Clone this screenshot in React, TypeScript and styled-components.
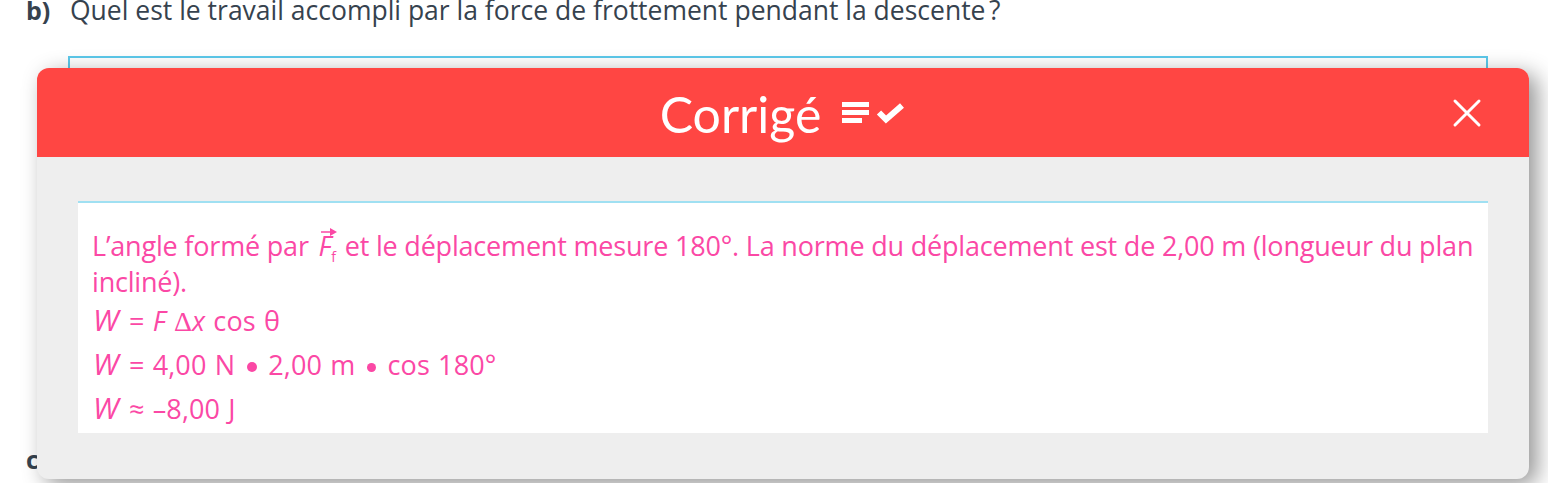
import React from "react";
import styled, { createGlobalStyle } from "styled-components";

const Global = createGlobalStyle`
  html, body { margin: 0; padding: 0; background: #fff; overflow: hidden; }
  #root { width: 1548px; height: 483px; }
`;

const Page = styled.div`
  position: relative;
  width: 1548px;
  height: 483px;
  overflow: hidden;
  padding: 0 0 0 26px;
  box-sizing: border-box;
  font-family: "Open Sans", "Noto Sans", sans-serif;
  color: #36424e;
`;

const Question = styled.div`
  display: flex;
  align-items: baseline;
  margin-top: -6px;
  font-size: 26.5px;
  font-weight: 400;
  line-height: 33px;
`;

const Label = styled.b`
  width: 44px;
  font-weight: 700;
  font-size: 25px;
`;

const AnswerBox = styled.div`
  margin: 29px 0 0 42px;
  width: 1420px;
  height: 340px;
  border: 2px solid #5cc8ea;
  box-sizing: border-box;
`;

const NextLabel = styled.b`
  display: block;
  margin-top: 46px;
  font-size: 25px;
  line-height: 34px;
  font-weight: 700;
`;

const Modal = styled.section`
  position: absolute;
  left: 37px;
  top: 68px;
  width: 1492px;
  height: 411px;
  border-radius: 12px;
  background: #eeeeee;
  box-shadow: 8px 6px 22px rgba(0, 0, 0, 0.42);
  overflow: hidden;
`;

const Header = styled.header`
  position: relative;
  height: 89px;
  background: #ff4643;
  display: flex;
  align-items: center;
  justify-content: center;
  gap: 21px;
  color: #fff;
`;

const Title = styled.h2`
  margin: 4px 0 0;
  font-family: Lato, sans-serif;
  font-weight: 400;
  font-size: 50px;
  line-height: 85px;
`;

const Close = styled.button`
  position: absolute;
  right: 47px;
  top: 30px;
  width: 30px;
  height: 30px;
  padding: 0;
  border: 0;
  background: none;
  display: block;
`;

const Content = styled.div`
  margin: 44px 41px 0;
  height: 232px;
  box-sizing: border-box;
  padding: 25px 14px 0;
  background: #fff;
  border-top: 2px solid #a0e0f2;
  color: #fb48a5;
  font-family: "Open Sans", "Noto Sans", sans-serif;
  font-size: 27px;
  letter-spacing: -0.19px;
`;

const Para = styled.p`
  margin: 0 0 -1px;
  line-height: 36px;
  white-space: nowrap;
`;

const Formula = styled.p`
  margin: 0;
  height: 44px;
  line-height: 44px;
  white-space: nowrap;
  word-spacing: 1px;
  letter-spacing: 0.15px;
`;

const Var = styled.i`
  font-style: italic;
`;

const WVar = styled(Var)`
  font-size: 30px;
  line-height: 0;
  margin: 0 2px 0 1px;
`;

const Delta = styled.span`
  font-family: "Liberation Serif", serif;
  font-weight: 400;
  font-size: 28px;
`;

const Theta = styled.span`
  font-weight: 500;
`;

const VectorWrap = styled.span`
  position: relative;
  display: inline-block;
  font-style: italic;
  margin: 0 2px 0 3px;
`;

const Arrow = styled.svg`
  position: absolute;
  left: 1px;
  top: -1px;
  width: 18px;
  height: 10px;
`;

const Sub = styled.sub`
  font-size: 14px;
  font-style: normal;
  line-height: 0;
`;

const Dot = styled.span`
  display: inline-block;
  width: 10px;
  height: 10px;
  border-radius: 50%;
  background: #fb48a5;
  margin: 0 11px 0 12px;
  vertical-align: 3px;
`;

const SmallDot = styled(Dot)`
  width: 9px;
  height: 9px;
`;

export default function App() {
  return (
    <Page>
      <Global />
      <Question>
        <Label>b)</Label>
        <span>Quel est le travail accompli par la force de frottement pendant la descente{"\u202f"}?</span>
      </Question>
      <AnswerBox />
      <NextLabel>c)</NextLabel>
      <Modal>
        <Header>
          <Title>Corrigé</Title>
          <svg width="64" height="24" viewBox="0 0 64 24" aria-hidden="true">
            <g fill="#fff">
              <rect x="0" y="1" width="27" height="5" />
              <rect x="0" y="9" width="27" height="5" />
              <rect x="0" y="17" width="20" height="5" />
            </g>
            <path d="M37 11.5 L44 18.5 L60 4.5" fill="none" stroke="#fff" strokeWidth="6" />
          </svg>
          <Close aria-label="Fermer">
            <svg width="30" height="30" viewBox="0 0 30 30">
              <path d="M3 3 L27 27 M27 3 L3 27" stroke="#fff" strokeWidth="3" strokeLinecap="round" />
            </svg>
          </Close>
        </Header>
        <Content>
          <Para>
            L’angle formé par{" "}
            <VectorWrap>
              F<Sub>f</Sub>
              <Arrow viewBox="0 0 18 10">
                <path d="M1 5 H12" stroke="#fb48a5" strokeWidth="1.4" />
                <path d="M10 1 L17 5 L10 9 Z" fill="#fb48a5" />
              </Arrow>
            </VectorWrap>{" "}
            et le déplacement mesure 180°. La norme du déplacement est de 2,00 m (longueur du plan
            <br />
            incliné).
          </Para>
          <Formula>
            <WVar>W</WVar> = <Var>F</Var> <Delta>Δ</Delta>
            <Var>x</Var> cos <Theta>θ</Theta>
          </Formula>
          <Formula>
            <WVar>W</WVar> = 4,00 N<Dot />2,00 m<SmallDot />cos 180°
          </Formula>
          <Formula>
            <WVar>W</WVar> ≈ –8,00 J
          </Formula>
        </Content>
      </Modal>
    </Page>
  );
}
